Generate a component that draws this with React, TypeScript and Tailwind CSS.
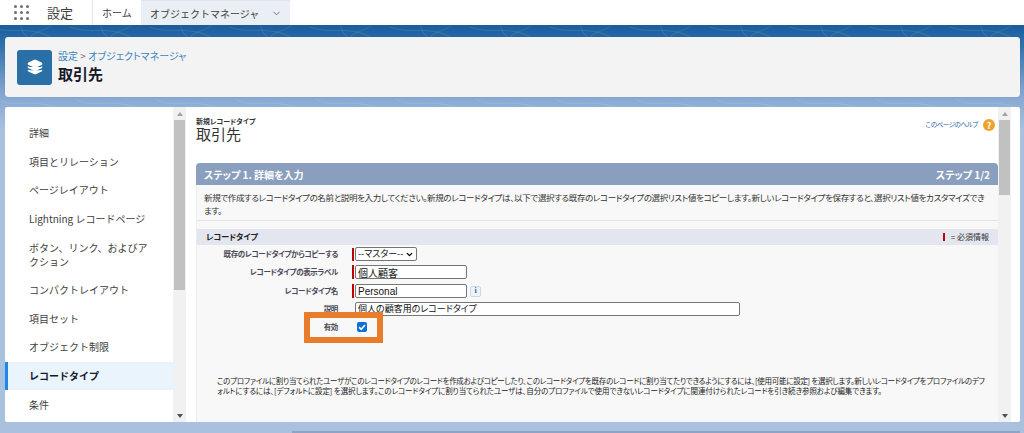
import { ChevronDown, Layers } from 'lucide-react';

const navItems = [
  '詳細',
  '項目とリレーション',
  'ページレイアウト',
  'Lightning レコードページ',
  'ボタン、リンク、およびアクション',
  'コンパクトレイアウト',
  '項目セット',
  'オブジェクト制限',
  'レコードタイプ',
  '条件',
];

const contours = [0, 1, 2, 3, 4, 5, 6, 7, 8, 9, 10, 11, 12];

function ScrollBar({ thumb }: { thumb: string }) {
  return (
    <div className="flex h-full w-[13px] shrink-0 flex-col items-center bg-[#f1f1f1]">
      <div className="flex h-[13px] shrink-0 items-center justify-center">
        <div className="h-0 w-0 border-x-[3px] border-b-[4px] border-x-transparent border-b-[#a3a3a3]" />
      </div>
      <div className={`w-[11px] shrink-0 bg-[#c1c1c1] ${thumb}`} />
      <div className="flex-1" />
      <div className="flex h-[13px] shrink-0 items-center justify-center">
        <div className="h-0 w-0 border-x-[3px] border-t-[4px] border-x-transparent border-t-[#505050]" />
      </div>
    </div>
  );
}

function RedBar({ className }: { className: string }) {
  return <div className={`w-[2px] bg-[#c00000] ${className}`} />;
}

function FormLabel({ children }: { children: string }) {
  return (
    <div className="w-[142px] shrink-0 whitespace-nowrap pr-px text-right text-[7.5px] font-bold tracking-[-0.35px] text-[#4a4a56]">
      {children}
    </div>
  );
}

export default function App() {
  return (
    <div className="relative flex h-[433px] w-[1024px] flex-col overflow-hidden bg-[linear-gradient(180deg,#1a5c9c_25px,#2f71ad_45px,#7fa3cf_90px,#a9c1df_130px)] font-['Noto_Sans_CJK_JP',sans-serif]">
      {/* Faint contour lines in the blue band */}
      <svg className="absolute left-0 top-[25px] h-[85px] w-[1024px]" viewBox="0 0 1024 85" fill="none">
        {contours.map((i) => (
          <g key={i} stroke="white" strokeOpacity="0.1" strokeWidth="1" transform={`translate(${i * 80} 0)`}>
            <path d="M-10 2 C10 10 30 0 50 12" />
            <path d="M20 0 C24 4 20 8 28 12" />
            <path d="M52 0 C44 6 36 6 30 12" />
            <path d="M-5 74 C15 84 30 72 60 84" />
          </g>
        ))}
      </svg>

      {/* Top bar */}
      <div className="relative flex h-[25px] shrink-0 items-stretch bg-white">
        <div className="ml-[14px] mt-[5px] grid h-[15px] w-[15px] grid-cols-3 gap-[2.5px]">
          {Array.from({ length: 9 }).map((_, i) => (
            <div key={i} className="h-[3.4px] w-[3.4px] rounded-full bg-[#6f6f6f]" />
          ))}
        </div>
        <div className="ml-[18px] w-[45px] text-[13px] leading-[25px] text-[#3e3e3c]">設定</div>
        <div className="w-[49px] border-l border-[#e5e5e5] pl-[9px] text-[10px] leading-[25px] text-[#3e3e3c]">ホーム</div>
        <div className="flex w-[149px] items-center border-t border-[#dfe6ec] bg-[#e9eff4] pl-[9px] text-[10px] text-[#3e3e3c]">
          <span className="whitespace-nowrap">オブジェクトマネージャ</span>
          <ChevronDown className="ml-[12px] h-[11px] w-[11px] text-[#706e6b]" />
        </div>
      </div>

      <div className="relative flex flex-1 flex-col pl-[5px] pr-[4px] pt-[12px]">
        {/* Page header */}
        <div className="flex h-[60px] shrink-0 items-center rounded-[3px] bg-[#f3f3f3] pl-[12px] shadow-[0_0_1px_rgba(0,0,0,0.3)]">
          <div className="flex h-[35px] w-[35px] items-center justify-center rounded-[3px] bg-[#2a6fa5]">
            <Layers className="h-[16px] w-[16px] fill-white text-white" />
          </div>
          <div className="ml-[6px]">
            <div className="text-[10px] leading-[14px] text-[#3d85c0] [font-feature-settings:'palt']">
              設定 <span className="text-[#706e6b]">&gt;</span> オブジェクトマネージャ
            </div>
            <div className="text-[15px] font-bold leading-[22px] text-[#16192a]">取引先</div>
          </div>
        </div>

        {/* Main panel */}
        <div className="mt-[10px] flex h-[315px] shrink-0 rounded-[2px] bg-white pr-[9px]">
          {/* Sidebar */}
          <div className="w-[168px] shrink-0 pt-[12px]">
            {navItems.map((item) => {
              const active = item === 'レコードタイプ';
              return (
                <div
                  key={item}
                  className={
                    active
                      ? 'border-l-[3px] border-[#1b8ae6] bg-[#eaf4fd] py-[7.3px] pl-[21px] pr-[20px] text-[10px] font-bold leading-[14px] text-[#16192a]'
                      : 'py-[7.3px] pl-[24px] pr-[20px] text-[10px] leading-[14px] text-[#3e3e3c]'
                  }
                >
                  {item}
                </div>
              );
            })}
          </div>
          <ScrollBar thumb="h-[170px]" />

          {/* Content */}
          <div className="flex min-w-0 flex-1 flex-col pl-[10px] [font-feature-settings:'palt']">
            <div className="flex h-[56px] shrink-0 justify-between pr-[3px] pt-[10px]">
              <div>
                <div className="text-[7px] font-bold leading-[9px] text-[#333333]">新規レコードタイプ</div>
                <div className="text-[15px] leading-[16px] text-[#333333] [font-feature-settings:normal]">取引先</div>
              </div>
              <div className="flex h-[16px] items-center">
                <span className="text-[6.5px] tracking-[-0.4px] text-[#1f5f9e]">このページのヘルプ</span>
                <div className="ml-[5px] flex h-[12px] w-[12px] items-center justify-center rounded-full bg-[#eda32a] text-[9px] font-bold leading-none text-white">?</div>
              </div>
            </div>

            <div className="flex h-[22px] shrink-0 items-center justify-between rounded-t-[4px] bg-[#8a9ebe] px-[8px] text-[10px] font-bold text-white">
              <span>ステップ 1. 詳細を入力</span>
              <span>ステップ 1/2</span>
            </div>

            <div className="relative flex-1 border-l border-[#ececec] bg-[#f8f8f8]">
              <div className="h-[36px] whitespace-nowrap border-b border-[#e4e4e4] px-[7px] pt-[6px] text-[8.5px] leading-[13px] tracking-[-0.36px] text-[#333333]">
                新規で作成するレコードタイプの名前と説明を入力してください。新規のレコードタイプは、以下で選択する既存のレコードタイプの選択リスト値をコピーします。新しいレコードタイプを保存すると、選択リスト値をカスタマイズでき<br />ます。
              </div>
              <div className="mt-[8px] flex h-[16px] items-center justify-between bg-[#e3e6ef] pl-[9px] pr-[9px]">
                <span className="text-[8px] font-bold text-[#222222]">レコードタイプ</span>
                <span className="flex items-center text-[8px] text-[#333333]">
                  <RedBar className="mr-[6px] h-[8px]" />= 必須情報
                </span>
              </div>

              {/* Form rows */}
              <div className="flex h-[18px] items-center">
                <FormLabel>既存のレコードタイプからコピーする</FormLabel>
                <RedBar className="ml-[13px] h-[13px]" />
                <div className="ml-px flex h-[14px] w-[62px] items-center justify-between whitespace-nowrap rounded-[2px] border border-[#767676] bg-white pl-[2px] pr-[2px] text-[9px] text-[#111111]">
                  --マスター--
                  <ChevronDown className="h-[9px] w-[9px] shrink-0 text-black" strokeWidth={3.5} />
                </div>
              </div>
              <div className="flex h-[18px] items-center">
                <FormLabel>レコードタイプの表示ラベル</FormLabel>
                <RedBar className="ml-[13px] h-[14px]" />
                <div className="ml-px flex h-[14px] w-[112px] items-center rounded-[2px] border border-[#767676] bg-white pl-[2px] text-[10px] text-[#111111] [font-feature-settings:normal]">個人顧客</div>
              </div>
              <div className="mt-px flex h-[18px] items-center">
                <FormLabel>レコードタイプ名</FormLabel>
                <RedBar className="ml-[13px] h-[14px]" />
                <div className="ml-px flex h-[14px] w-[112px] items-center rounded-[2px] border border-[#767676] bg-white pl-[2px] font-['Liberation_Sans',sans-serif] text-[10px] text-[#111111]">Personal</div>
                <div className="ml-[3px] flex h-[11px] w-[11px] items-center justify-center rounded-[2px] border border-[#c9d8ea] bg-[#eef3f9] font-['Liberation_Serif',serif] text-[8px] font-bold text-[#2f6ea5]">i</div>
              </div>
              <div className="flex h-[18px] items-center">
                <FormLabel>説明</FormLabel>
                <div className="ml-[16px] flex h-[14px] w-[385px] items-center rounded-[2px] border border-[#767676] bg-white pl-[2px] text-[9px] text-[#111111]">個人の顧客用のレコードタイプ</div>
              </div>
              <div className="flex h-[18px] items-center">
                <FormLabel>有効</FormLabel>
                <div className="ml-[18px] flex h-[10px] w-[10px] items-center justify-center rounded-[2px] bg-[#0a6fd8]">
                  <svg viewBox="0 0 10 10" className="h-[10px] w-[10px]">
                    <path d="M2 5.2 L4.2 7.3 L8 2.9" fill="none" stroke="white" strokeWidth="1.6" />
                  </svg>
                </div>
              </div>

              <div className="mt-[40px] whitespace-nowrap pl-[20px] text-[7.5px] leading-[10px] text-[#222222]">
                <div className="tracking-[-0.27px]">
                  このプロファイルに割り当てられたユーザがこのレコードタイプのレコードを作成およびコピーしたり、このレコードタイプを既存のレコードに割り当てたりできるようにするには、[使用可能に設定] を選択します。新しいレコードタイプをプロファイルのデフ
                </div>
                <div className="tracking-[-0.1px]">
                  ォルトにするには、[デフォルトに設定] を選択します。このレコードタイプに割り当てられたユーザは、自分のプロファイルで使用できないレコードタイプに関連付けられたレコードを引き続き参照および編集できます。
                </div>
              </div>

              {/* Orange highlight over the checkbox row */}
              <div className="absolute left-[107px] top-[127px] h-[31px] w-[79px] border-[6px] border-[#e87c2b]" />
            </div>
          </div>
          <ScrollBar thumb="h-[75px]" />
        </div>

        <div className="ml-[287px] mt-[9px] h-[2px] bg-[#8ea4c6]" />
      </div>
    </div>
  );
}
